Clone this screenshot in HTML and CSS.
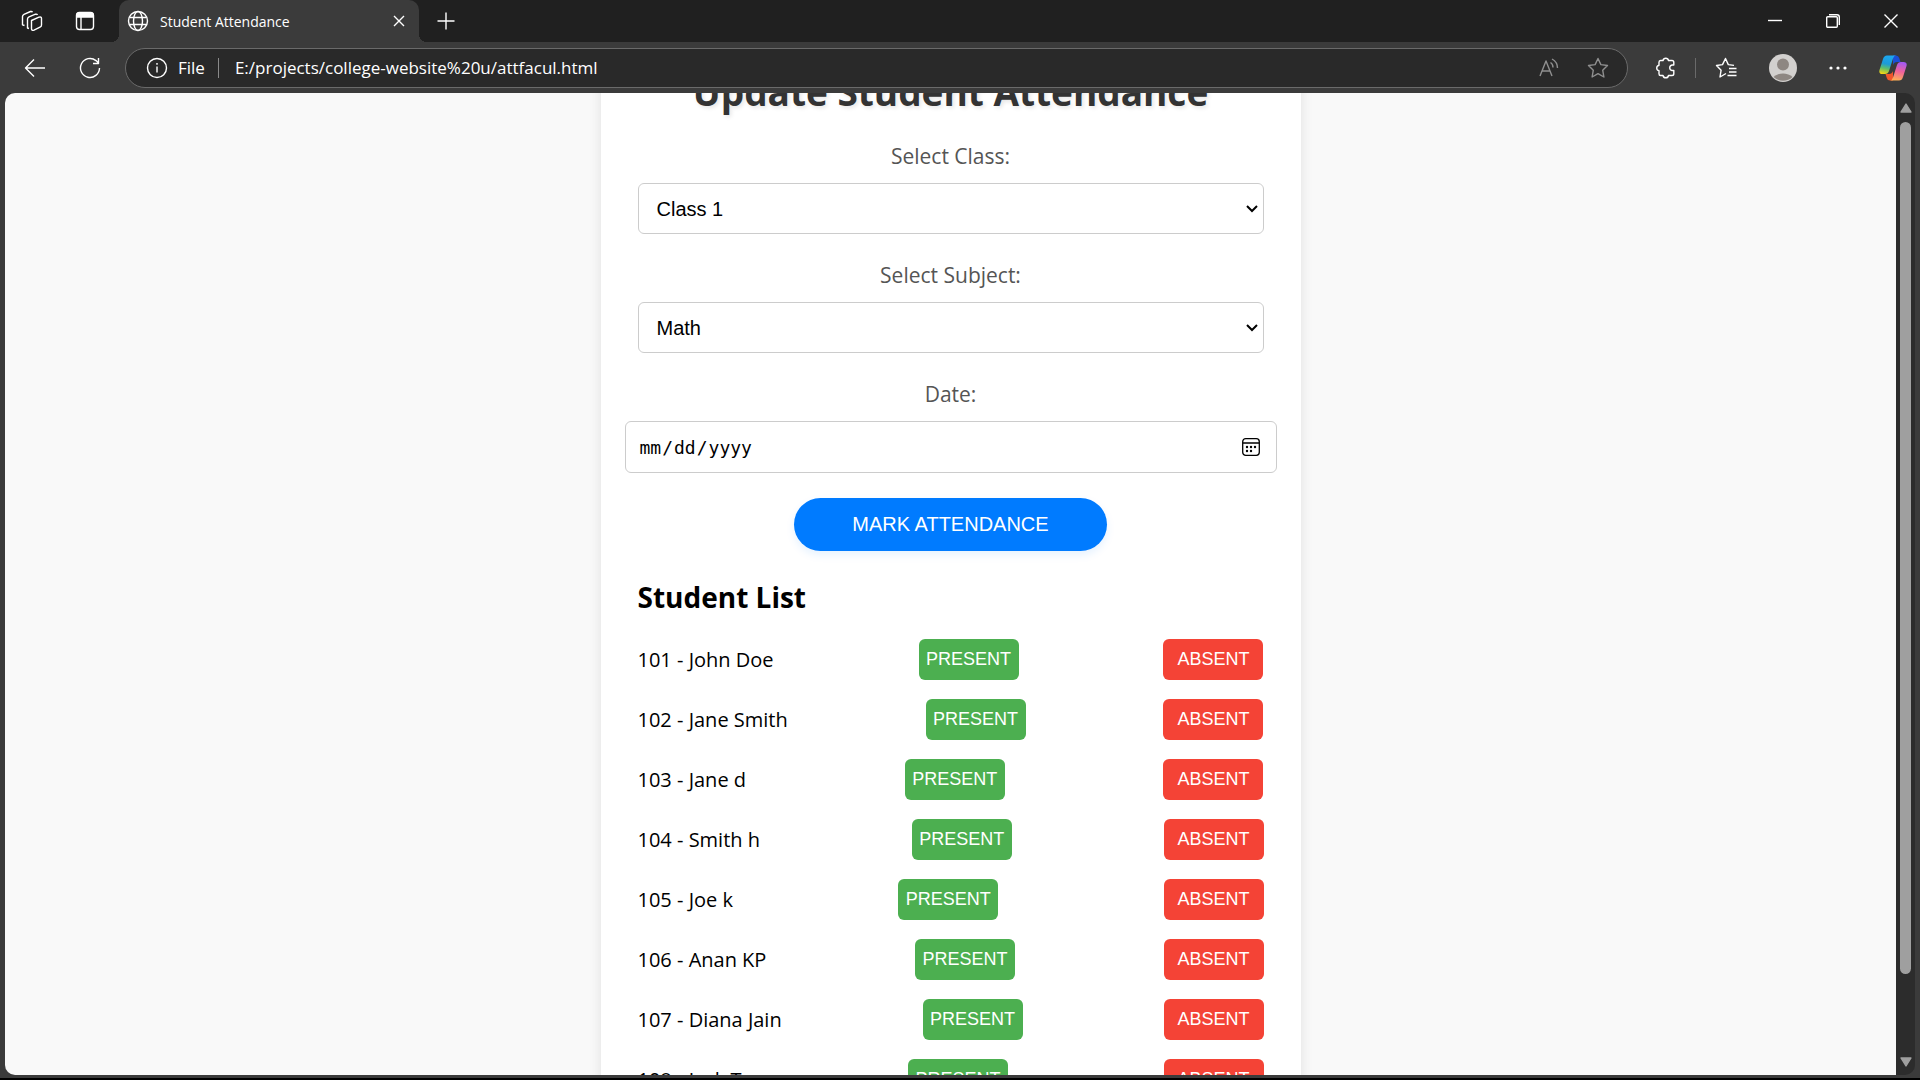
FILE: index.html
```html
<!DOCTYPE html>
<html lang="en">
<head>
    <meta charset="UTF-8">
    <meta name="viewport" content="width=device-width, initial-scale=1.0">
    <title>Student Attendance</title>
    <link rel="stylesheet" href="styles.css">
</head>
<body>
    <div class="title-bar">
        <div class="tab-tools">
            <button class="icon-btn" aria-label="Workspaces">
                <svg width="22" height="22" viewBox="0 0 22 22">
                    <path d="M10.5 10.500l7.500-3.300q2.500-.7 2.500 1.300v6.500q0 1.500-1.500 2.200l-6 3q-2.500.8-2.500-1.500z"/>
                    <path d="M8 18.500l-1.500-.5V9q0-1.500 1.500-2.200l6.500-2.600q1.500-.3 2 .8"/>
                    <path d="M3.500 15.500l-2-.7V6.500Q1.500 5 3 4.300l6.500-2.800q1.500-.3 2 .8"/>
                </svg>
            </button>
            <button class="icon-btn" aria-label="Tab actions">
                <svg width="20" height="20" viewBox="0 0 20 20">
                    <rect x="1.500" y="1.500" width="17" height="17" rx="3"/>
                    <path d="M2 6V4q0-2 2-2h12q2 0 2 2v2z" fill="#fff"/>
                    <path d="M6 6v12"/>
                </svg>
            </button>
        </div>
        <div class="tab">
            <svg width="22" height="22" viewBox="0 0 22 22">
                <circle cx="11" cy="11" r="9.500"/>
                <ellipse cx="11" cy="11" rx="4.500" ry="9.500"/>
                <path d="M2.500 7.500h17M2.500 14.500h17"/>
            </svg>
            <span class="tab-title">Student Attendance</span>
            <button class="icon-btn" aria-label="Close tab">
                <svg width="12" height="12" viewBox="0 0 12 12"><path d="M1 1l10 10M11 1L1 11"/></svg>
            </button>
        </div>
        <button class="icon-btn new-tab" aria-label="New tab">
            <svg width="18" height="18" viewBox="0 0 18 18"><path d="M9 0.500v17M0.500 9h17"/></svg>
        </button>
        <div class="window-controls">
            <button class="icon-btn" aria-label="Minimize">
                <svg width="14" height="14" viewBox="0 0 14 14"><path d="M0 6.500h14"/></svg>
            </button>
            <button class="icon-btn" aria-label="Restore">
                <svg width="14" height="14" viewBox="0 0 14 14">
                    <rect x="0.700" y="2.700" width="10.600" height="10.600" rx="1"/>
                    <path d="M3 .7h8q2.300 0 2.300 2.300v8"/>
                </svg>
            </button>
            <button class="icon-btn" aria-label="Close">
                <svg width="14" height="14" viewBox="0 0 14 14"><path d="M.5 .5l13 13M13.500 .5l-13 13"/></svg>
            </button>
        </div>
    </div>

    <div class="toolbar">
        <div class="nav-buttons">
            <button class="icon-btn" aria-label="Back">
                <svg width="22" height="20" viewBox="0 0 22 20"><path d="M21 10H2M10 1.500L1.500 10l8.500 8.500"/></svg>
            </button>
            <button class="icon-btn" aria-label="Refresh">
                <svg width="22" height="22" viewBox="0 0 22 22"><path d="M20.500 11a9.500 9.500 0 1 1-3.500-7.400L19.500 6M19.500 1v5.500H14"/></svg>
            </button>
        </div>
        <div class="address-bar">
            <svg width="22" height="22" viewBox="0 0 22 22">
                <circle cx="11" cy="11" r="9.500"/>
                <path d="M11 9.500v6M11 6v1.700"/>
            </svg>
            <span class="scheme">File</span>
            <input type="text" class="url" aria-label="Address" value="E:/projects/college-website%20u/attfacul.html">
            <button class="icon-btn dim" aria-label="Read aloud">
                <svg width="20" height="20" viewBox="0 0 20 20">
                    <path d="M1 18L7 3l6 15M3 13h8"/>
                    <path d="M11.500 4.500q2.500 1.500 2.500 5M13 1q5.500 3 5.500 9"/>
                </svg>
            </button>
            <button class="icon-btn dim" aria-label="Add to favorites">
                <svg width="22" height="22" viewBox="0 0 22 22"><path d="M11 1.500l2.900 6.100 6.600.9-4.800 4.700 1.200 6.800-5.900-3.300L5.100 20l1.200-6.800L1.500 8.500l6.600-.9z"/></svg>
            </button>
        </div>
        <div class="toolbar-actions">
            <div class="action-group">
                <button class="icon-btn" aria-label="Extensions">
                    <svg width="20" height="22" viewBox="0 0 20 22">
                        <path d="M4.500 3.500H7a2.800 2.800 0 0 1 5.500 0H16q1.800 0 1.800 1.800V8H16a2.800 2.800 0 0 0 0 5.500h1.800v3.200q0 1.800-1.800 1.800h-3.500a2.800 2.800 0 0 1-5.500 0H4.500q-1.500 0-1.500-1.800v-3a2.800 2.800 0 0 1 0-5.500V5.300q0-1.800 1.500-1.800z"/>
                    </svg>
                </button>
                <span class="divider"></span>
                <button class="icon-btn" aria-label="Favorites">
                    <svg width="22" height="22" viewBox="0 0 22 22">
                        <path d="M11 16.500L5 20l1.100-6.800L1.500 8.500l6-.9 3-6.100 2.800 6.100 5.700.8M14 11.500h7.500M14 15h7.500M12.500 18.500h9"/>
                    </svg>
                </button>
            </div>
            <button class="icon-btn" aria-label="Profile">
                <svg class="avatar" width="28" height="28" viewBox="0 0 28 28">
                    <circle cx="14" cy="14" r="14" fill="#d2d0ce"/>
                    <circle cx="14" cy="10.500" r="6" fill="#8e8782"/>
                    <path d="M4.500 23a12 9 0 0 1 19 0 14 14 0 0 1-19 0z" fill="#8e8782"/>
                </svg>
            </button>
            <button class="icon-btn" aria-label="Settings and more">
                <svg class="dots" width="18" height="4" viewBox="0 0 18 4">
                    <circle cx="2" cy="2" r="1.600"/>
                    <circle cx="9" cy="2" r="1.600"/>
                    <circle cx="16" cy="2" r="1.600"/>
                </svg>
            </button>
            <button class="icon-btn" aria-label="Copilot">
                <svg class="copilot" width="28" height="26" viewBox="0 0 28 26">
                    <defs>
                        <linearGradient id="copilotLeft" x1="0.500" y1="0" x2="0.300" y2="1">
                            <stop offset="0" stop-color="#1ca7f0"/>
                            <stop offset="0.450" stop-color="#1d9bd7"/>
                            <stop offset="0.700" stop-color="#5fbf6a"/>
                            <stop offset="1" stop-color="#f4d314"/>
                        </linearGradient>
                        <linearGradient id="copilotRight" x1="0.600" y1="0" x2="0.400" y2="1">
                            <stop offset="0" stop-color="#a259f2"/>
                            <stop offset="0.500" stop-color="#f0629a"/>
                            <stop offset="1" stop-color="#fdb056"/>
                        </linearGradient>
                    </defs>
                    <path d="M14 .5h3q2.500 0 3.200 2.500L21.500 7H18q-3 0-4 3z" fill="#1b4fd6"/>
                    <path d="M14 25.500h-3q-2.500 0-3.200-2.500L6.500 19H10q3 0 4-3z" fill="#f0552b"/>
                    <path d="M8 .5h9q-2 0-3 3l-4 12.500q-1 3-4 3H3.500Q-.5 19 .5 15L4 4Q5 .5 8 .5z" fill="url(#copilotLeft)"/>
                    <path d="M20 25.500h-9q2 0 3-3L18 10q1-3 4-3h2.500q4 0 3 4L24 22q-1 3.500-4 3.500z" fill="url(#copilotRight)"/>
                </svg>
            </button>
        </div>
    </div>

    <div class="viewport">
        <div class="page">
            <div class="container">
                <h1>Update Student Attendance</h1>
                <form id="attendanceForm">
                    <div class="form-group">
                        <label for="classSelect">Select Class:</label>
                        <select id="classSelect">
                            <option>Class 1</option>
                            <option>Class 2</option>
                            <option>Class 3</option>
                        </select>
                    </div>
                    <div class="form-group">
                        <label for="subjectSelect">Select Subject:</label>
                        <select id="subjectSelect">
                            <option>Math</option>
                            <option>Science</option>
                            <option>English</option>
                        </select>
                    </div>
                    <div class="form-group date-group">
                        <label for="date">Date:</label>
                        <input type="date" id="date">
                    </div>
                    <button type="button" class="mark-btn">MARK ATTENDANCE</button>
                </form>

                <h2>Student List</h2>
                <ul class="student-list">
                    <li><span>101 - John Doe</span><button class="present">PRESENT</button><button class="absent">ABSENT</button></li>
                    <li><span>102 - Jane Smith</span><button class="present">PRESENT</button><button class="absent">ABSENT</button></li>
                    <li><span>103 - Jane d</span><button class="present">PRESENT</button><button class="absent">ABSENT</button></li>
                    <li><span>104 - Smith h</span><button class="present">PRESENT</button><button class="absent">ABSENT</button></li>
                    <li><span>105 - Joe k</span><button class="present">PRESENT</button><button class="absent">ABSENT</button></li>
                    <li><span>106 - Anan KP</span><button class="present">PRESENT</button><button class="absent">ABSENT</button></li>
                    <li><span>107 - Diana Jain</span><button class="present">PRESENT</button><button class="absent">ABSENT</button></li>
                    <li><span>108 - Jack Ta</span><button class="present">PRESENT</button><button class="absent">ABSENT</button></li>
                </ul>
            </div>
        </div>
        <div class="scrollbar">
            <svg width="12" height="10" viewBox="0 0 12 10"><path d="M6 1l5 8H1z"/></svg>
            <div class="track"><div class="thumb"></div></div>
            <svg width="12" height="10" viewBox="0 0 12 10"><path d="M6 9l5-8H1z"/></svg>
        </div>
    </div>
</body>
</html>
```

FILE: styles.css
```css
* {
    box-sizing: border-box;
}
body {
    margin: 0;
    height: 100vh;
    display: flex;
    flex-direction: column;
    overflow: hidden;
    background-color: #3b3b3b;
    border-bottom: 2px solid #000;
    font-family: 'Open Sans', 'Noto Sans', sans-serif;
}
svg {
    display: block;
    fill: none;
    stroke: #fff;
    stroke-width: 1.4;
    flex: none;
    stroke-linejoin: round;
}
.icon-btn {
    display: flex;
    align-items: center;
    justify-content: center;
    padding: 0;
    border: none;
    background: none;
    cursor: pointer;
}

/* Title bar */
.title-bar {
    display: flex;
    align-items: center;
    height: 42px;
    background-color: #202020;
}
.tab-tools {
    display: flex;
    align-items: center;
    gap: 32px;
    width: 119px;
    padding-left: 21px;
}
.tab {
    position: relative;
    display: flex;
    align-items: center;
    gap: 11px;
    width: 300px;
    height: 42px;
    padding: 0 14px 0 8px;
    background-color: #3b3b3b;
    border-radius: 10px 10px 0 0;
}
/* curved feet where the tab meets the toolbar */
.tab::before,
.tab::after {
    content: "";
    position: absolute;
    bottom: 0;
    width: 8px;
    height: 8px;
}
.tab::before {
    right: 100%;
    background: radial-gradient(circle at 0 0, #202020 8px, #3b3b3b 8px);
}
.tab::after {
    left: 100%;
    background: radial-gradient(circle at 100% 0, #202020 8px, #3b3b3b 8px);
}
.tab-title {
    flex: 1;
    color: #fff;
    font-size: 14px;
}
.new-tab {
    margin-left: 18px;
}
.window-controls {
    display: flex;
    gap: 44px;
    margin-left: auto;
    padding-right: 22px;
}

/* Toolbar */
.toolbar {
    display: flex;
    align-items: center;
    height: 51px;
    padding-right: 13px;
}
.nav-buttons {
    display: flex;
    gap: 33px;
    width: 125px;
    padding-left: 24px;
}
.address-bar {
    display: flex;
    align-items: center;
    flex: 1;
    height: 40px;
    padding: 0 18px 0 20px;
    background-color: #292929;
    border: 1px solid #6a6a6a;
    border-radius: 20px;
}
.scheme {
    margin-left: 10px;
    padding-right: 13px;
    border-right: 1px solid #8a8a8a;
    color: #fff;
    font-size: 17px;
    line-height: 20px;
}
.url {
    flex: 1;
    padding: 0 0 0 16px;
    border: none;
    outline: none;
    background: none;
    color: #fff;
    font-family: inherit;
    font-size: 17px;
}
.dim {
    margin-left: 28px;
}
.dim svg {
    stroke: #8f8f8f;
}
.toolbar-actions {
    display: flex;
    align-items: center;
    gap: 32px;
    margin-left: 28px;
}
.action-group {
    display: flex;
    align-items: center;
    gap: 19px;
}
.divider {
    width: 1px;
    height: 20px;
    background-color: #6a6a6a;
}
.avatar,
.copilot {
    stroke: none;
}
.dots {
    fill: #fff;
    stroke: none;
}

/* Page area */
.viewport {
    display: flex;
    flex: 1;
    min-height: 0;
    margin: 0 5px 3px;
    border-radius: 10px;
    overflow: hidden;
}
.page {
    flex: 1;
    overflow: hidden;
    background-color: #f9f9f9;
}
.container {
    max-width: 700px;
    margin: -29px auto 0;
    padding: 0 37px;
    background-color: #fff;
    box-shadow: 0 0 12px rgba(0, 0, 0, 0.1);
}
h1 {
    margin: 0 0 20px;
    color: #333;
    font-size: 37px;
    line-height: 56px;
    text-align: center;
    text-shadow: 2px 2px 4px rgba(0, 0, 0, 0.1);
}
.form-group {
    display: flex;
    flex-direction: column;
    margin-bottom: 25px;
}
.form-group label {
    margin-bottom: 11px;
    color: #555;
    font-size: 21px;
    line-height: 32px;
    text-align: center;
}
.form-group select,
.form-group input {
    height: 51px;
    border: 1px solid #ccc;
    border-radius: 6px;
    background-color: #fff;
    color: #000;
    font-size: 20px;
}
.form-group select {
    appearance: none;
    padding: 0 18px;
    background-image: url("data:image/svg+xml,%3Csvg xmlns='http://www.w3.org/2000/svg' width='12' height='8' viewBox='0 0 12 8'%3E%3Cpath d='M1 1l5 5 5-5' fill='none' stroke='%23000' stroke-width='2'/%3E%3C/svg%3E");
    background-repeat: no-repeat;
    background-position: right 5px center;
    font-family: 'Liberation Sans', Arial, sans-serif;
}
.date-group {
    margin: 0 -13px 25px;
}
.form-group input {
    height: 52px;
    padding: 0 13px;
    font-family: 'DejaVu Sans Mono', monospace;
    font-size: 18px;
}
.form-group input::-webkit-calendar-picker-indicator {
    width: 20px;
    height: 20px;
    padding: 0;
    margin-right: 2px;
    background-image: url("data:image/svg+xml,%3Csvg xmlns='http://www.w3.org/2000/svg' viewBox='0 0 20 20'%3E%3Crect x='1.700' y='1.700' width='16.600' height='16.600' rx='3' fill='none' stroke='%23000' stroke-width='1.300'/%3E%3Cpath d='M2 6h16' stroke='%23000' stroke-width='1.300'/%3E%3Cg fill='%23000'%3E%3Ccircle cx='6' cy='10' r='1.200'/%3E%3Ccircle cx='10' cy='10' r='1.200'/%3E%3Ccircle cx='14' cy='10' r='1.200'/%3E%3Ccircle cx='6' cy='14' r='1.200'/%3E%3Ccircle cx='10' cy='14' r='1.200'/%3E%3C/g%3E%3C/svg%3E");
    background-size: 20px 20px;
}
.mark-btn {
    display: block;
    width: 50%;
    height: 53px;
    margin: 0 auto;
    border: none;
    border-radius: 27px;
    background-color: #007bff;
    color: #fff;
    font-family: 'Liberation Sans', Arial, sans-serif;
    font-size: 20px;
    cursor: pointer;
    box-shadow: 0 4px 8px rgba(0, 123, 255, 0.1);
}
h2 {
    margin: 26px 0 22px;
    font-size: 28px;
    line-height: 40px;
}
.student-list {
    margin: 0;
    padding: 0;
    list-style: none;
}
.student-list li {
    display: flex;
    align-items: flex-start;
    justify-content: space-between;
    margin-bottom: 18px;
    font-size: 20px;
    line-height: 42px;
}
.present,
.absent {
    width: 100px;
    height: 41px;
    padding: 0;
    border: none;
    border-radius: 6px;
    color: #fff;
    font-family: 'Liberation Sans', Arial, sans-serif;
    font-size: 18px;
    cursor: pointer;
}
.present {
    background-color: #4caf50;
}
.absent {
    background-color: #f44336;
}

/* Scrollbar */
.scrollbar {
    display: flex;
    flex-direction: column;
    align-items: center;
    width: 19px;
    padding: 10px 0 8px;
    background-color: #2c2c2c;
}
.scrollbar svg {
    fill: #9f9f9f;
    stroke: #9f9f9f;
}
.track {
    flex: 1;
    padding: 9px 0;
}
.thumb {
    width: 11px;
    height: 92%;
    border-radius: 6px;
    background-color: #9f9f9f;
}
```
